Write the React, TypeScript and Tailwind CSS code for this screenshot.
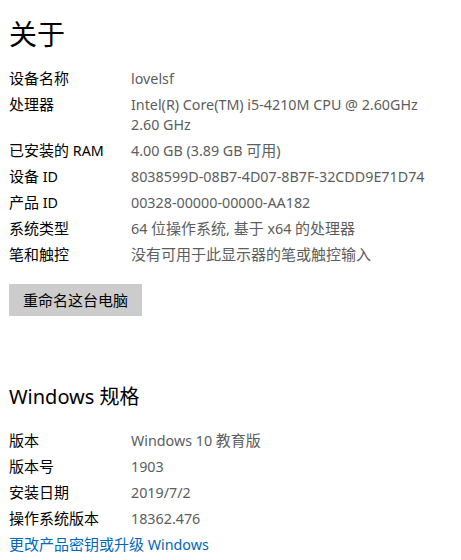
import React from "react";

const font = { fontFamily: '"Noto Sans", "Noto Sans CJK SC", sans-serif' };

type Row = { label: string; value: string[] };

const about: Row[] = [
  { label: "设备名称", value: ["lovelsf"] },
  { label: "处理器", value: ["Intel(R) Core(TM) i5-4210M CPU @ 2.60GHz", "2.60 GHz"] },
  { label: "已安装的 RAM", value: ["4.00 GB (3.89 GB 可用)"] },
  { label: "设备 ID", value: ["8038599D-08B7-4D07-8B7F-32CDD9E71D74"] },
  { label: "产品 ID", value: ["00328-00000-00000-AA182"] },
  { label: "系统类型", value: ["64 位操作系统, 基于 x64 的处理器"] },
  { label: "笔和触控", value: ["没有可用于此显示器的笔或触控输入"] },
];

const spec: Row[] = [
  { label: "版本", value: ["Windows 10 教育版"] },
  { label: "版本号", value: ["1903"] },
  { label: "安装日期", value: ["2019/7/2"] },
  { label: "操作系统版本", value: ["18362.476"] },
];

// CJK glyphs come out at 15px, latin at a slightly smaller size (Segoe UI is narrow)
const Mixed: React.FC<{ text: string }> = ({ text }) => (
  <div className="h-[20px] whitespace-nowrap leading-[20px]">
    {text.split(/([\u4e00-\u9fff]+)/).map((part, i) =>
      /[\u4e00-\u9fff]/.test(part) ? (
        <span key={i} className="text-[15px]">{part}</span>
      ) : (
        <span key={i} className="text-[14.3px]">{part}</span>
      ),
    )}
  </div>
);

const InfoRow: React.FC<{ row: Row }> = ({ row }) => (
  <div className="flex py-[3px]">
    <div className="w-[122px] shrink-0 text-black"><Mixed text={row.label} /></div>
    <div className="text-[#5d5d5d]">
      {row.value.map((v) => (
        <Mixed key={v} text={v} />
      ))}
    </div>
  </div>
);

export default function App() {
  return (
    <div className="h-[560px] w-[461px] overflow-hidden bg-white pl-[9px] text-[15px]" style={font}>
      <h1 className="pt-[14px] text-[28px] leading-[40px] text-black">关于</h1>
      <div className="mt-[11px]">
        {about.map((row) => (
          <InfoRow key={row.label} row={row} />
        ))}
      </div>
      <button className="mt-[17px] h-[32px] w-[133px] bg-[#cccccc] text-[15px] leading-[20px] text-black">重命名这台电脑</button>
      <h2 className="mt-[67px] h-[28px] text-[20px] leading-[28px] text-black">Windows 规格</h2>
      <div className="mt-[16px]">
        {spec.map((row) => (
          <InfoRow key={row.label} row={row} />
        ))}
        <div className="py-[3px] text-[#0067b8]"><Mixed text="更改产品密钥或升级 Windows" /></div>
      </div>
    </div>
  );
}
